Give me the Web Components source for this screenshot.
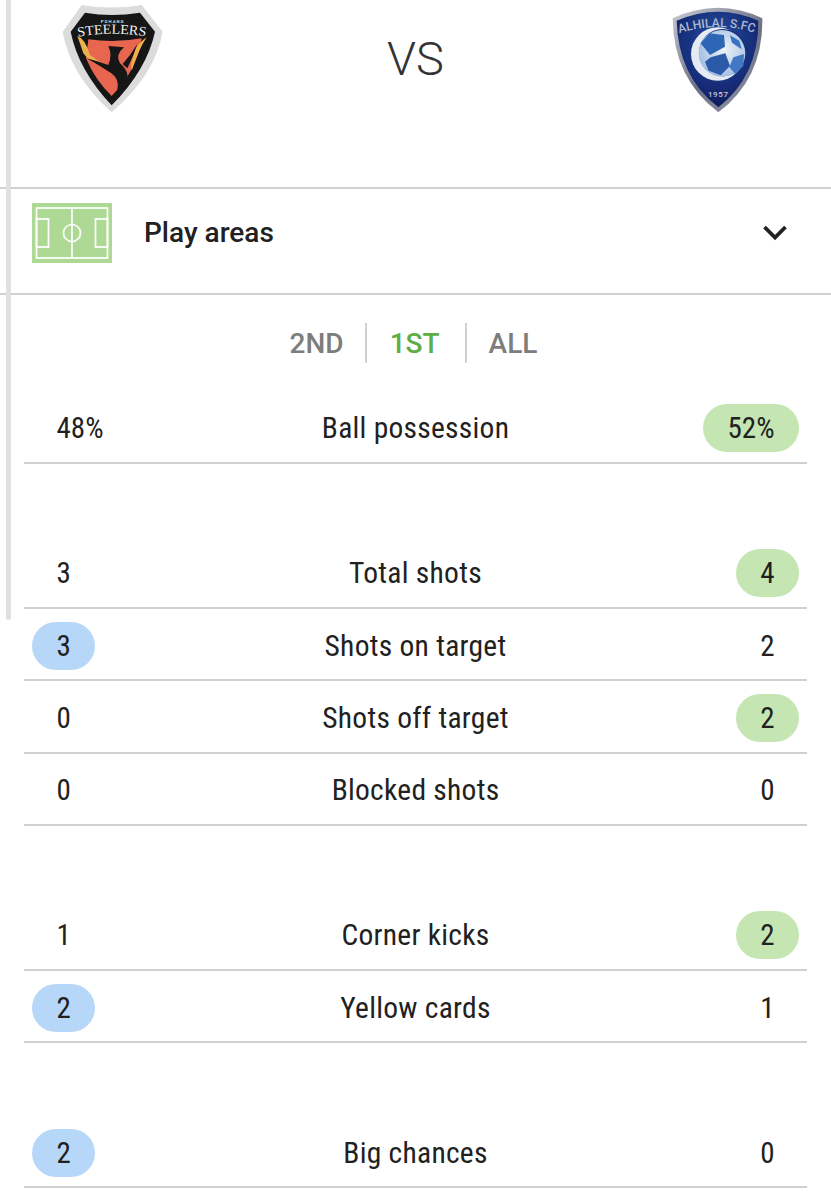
<!DOCTYPE html>
<html><head><meta charset="utf-8"><style>
html,body{margin:0;padding:0;background:#fff}
body{font-family:Roboto,"Liberation Sans",sans-serif;color:#212121;width:831px;height:1200px;overflow:hidden;position:relative}
</style></head><body>
<match-stats></match-stats>
<script>
class TeamCrest extends HTMLElement{
  connectedCallback(){
    const t=this.getAttribute('team');
    const s=this.attachShadow({mode:'open'});
    const pohang=`<svg width="140" height="120" viewBox="0 0 420 360">
      <defs><filter id="b"><feGaussianBlur stdDeviation="1.5"/></filter>
      <path id="arc" d="M114 110 Q215 92 320 110"/></defs>
      <g filter="url(#b)">
      <path d="M68 95 L125 15 Q215 30 305 15 L368 95 Q345 225 215 337 Q90 225 68 95Z" fill="#dcdcdc"/>
      <path d="M92 95 L135 38 Q215 52 300 38 L345 95 Q320 210 215 316 Q115 210 92 95Z" fill="#141414"/>
      <path d="M145 118 Q225 130 305 115 Q292 210 215 288 Q165 240 138 175Z" fill="#e8664f"/>
      <path d="M112 108 Q135 115 150 165 Q175 185 202 197 Q150 192 130 160 Q120 130 112 108Z" fill="#ecb04e"/>
      <path d="M320 112 Q295 150 275 212 Q270 190 285 150 Q300 125 320 112Z" fill="#ecb04e"/>
      <path d="M205 138 L252 142 Q224 165 240 190 Q275 220 256 255 Q243 275 226 286 Q246 240 212 218 Q180 198 140 175 Q175 184 205 195 Q218 165 205 138Z" fill="#141414"/>
      <path d="M292 132 Q280 170 262 205 L248 192 Q272 165 292 132Z" fill="#141414"/>
      </g>
      <text x="218" y="68" text-anchor="middle" font-family="Roboto,sans-serif" font-size="13" font-weight="700" fill="#dcdcdc" letter-spacing="3">POHANG</text>
      <text font-family="'Liberation Serif',serif" font-size="41" fill="#f2f2f2"><textPath href="#arc" textLength="204" lengthAdjust="spacingAndGlyphs">STEELERS</textPath></text>
    </svg>`;
    const hilal=`<svg width="140" height="120" viewBox="0 0 420 360">
      <defs>
        <linearGradient id="rim" x1="0" y1="0" x2=".8" y2="1"><stop offset="0" stop-color="#c8cbd4"/><stop offset=".6" stop-color="#6b7084"/><stop offset="1" stop-color="#8e93a4"/></linearGradient>
        <radialGradient id="bg" cx=".5" cy=".32" r=".72"><stop offset="0" stop-color="#234f9f"/><stop offset=".65" stop-color="#152c78"/><stop offset="1" stop-color="#0e1750"/></radialGradient>
        <radialGradient id="ball" cx=".55" cy=".42" r=".62"><stop offset="0" stop-color="#eef2f8"/><stop offset="1" stop-color="#9dbbe0"/></radialGradient>
        <filter id="b2"><feGaussianBlur stdDeviation="1.4"/></filter>
        <path id="arc2" d="M88 100 Q205 62 318 100"/>
      </defs>
      <g filter="url(#b2)">
      <path d="M68 55 Q205 -8 337 55 Q340 235 205 337 Q70 235 68 55Z" fill="url(#rim)"/>
      <path d="M80 62 Q205 8 325 62 Q326 228 205 322 Q84 228 80 62Z" fill="url(#bg)"/>
      <circle cx="203" cy="162" r="80" fill="#e6ebf3"/>
      <circle cx="218" cy="158" r="71" fill="#152c78"/>
      <circle cx="216" cy="160" r="70" fill="url(#ball)"/>
      <path d="M178 100 L222 105 L225 140 L180 165 L152 130Z" fill="#2f66b6"/>
      <path d="M240 106 L268 122 L275 148 L246 128Z" fill="#3872c0"/>
      <path d="M182 172 L226 160 L240 198 L212 226 L176 212 L165 185Z" fill="#2a5aa8"/>
      <path d="M250 172 L282 162 L280 198 L256 222 L238 202Z" fill="#4278c4"/>
      </g>
      <text font-family="Roboto,sans-serif" font-size="37" font-weight="500" fill="#aeb8d0"><textPath href="#arc2" textLength="228" lengthAdjust="spacingAndGlyphs">ALHILAL S.FC</textPath></text>
      <text x="205" y="290" text-anchor="middle" font-family="Roboto,sans-serif" font-size="24" font-weight="500" fill="#c6cbd9" letter-spacing="2">1957</text>
    </svg>`;
    s.innerHTML=`<style>:host{display:block;line-height:0}</style>`+(t==='pohang'?pohang:hilal);
  }
}
class MatchHeader extends HTMLElement{
  constructor(){super();this.attachShadow({mode:'open'}).innerHTML=`<style>
    :host{display:flex;box-sizing:border-box;height:187px;padding:0 41px 0 40px;justify-content:space-between;align-items:flex-start;position:relative}
    .vs{position:absolute;left:0;right:0;top:33px;text-align:center;font-size:47px;line-height:52px;font-weight:300;color:#333}
    </style><slot></slot><div class="vs">VS</div>`;}
}
class AreasBar extends HTMLElement{
  constructor(){super();this.attachShadow({mode:'open'}).innerHTML=`<style>
    :host{display:flex;box-sizing:border-box;height:108px;border-top:2px solid #d0d0d0;border-bottom:2px solid #d0d0d0;align-items:center;padding:0 44px 16px 32px}
    svg.pitch{display:block;flex:none}
    .label{flex:1;margin-left:32px;font-size:28px;font-weight:500;color:#212121;line-height:32px}
    </style>
    <svg class="pitch" width="80" height="60" viewBox="0 0 80 60">
      <rect width="80" height="60" fill="#aed994"/>
      <g fill="none" stroke="#fff" stroke-width="1.7">
        <rect x="4.5" y="5" width="71" height="50"/>
        <line x1="40" y1="5" x2="40" y2="55"/>
        <circle cx="40" cy="30" r="8.5"/>
        <rect x="4.5" y="16" width="12" height="28"/>
        <rect x="63.5" y="16" width="12" height="28"/>
      </g>
    </svg>
    <div class="label"><slot></slot></div>
    <svg width="24" height="16" viewBox="0 0 24 16"><path d="M1.5 2 L12 12.5 L22.5 2" fill="none" stroke="#212121" stroke-width="3.8"/></svg>`;}
}
class PeriodTabs extends HTMLElement{
  constructor(){super();this.attachShadow({mode:'open'}).innerHTML=`<style>
    :host{display:flex;height:96.5px;justify-content:center;align-items:center;box-sizing:border-box;padding:0 4px 1.5px 0}
    </style><slot></slot>`;}
}
class PeriodTab extends HTMLElement{
  constructor(){super();this.attachShadow({mode:'open'}).innerHTML=`<style>
    :host{display:block;box-sizing:border-box;height:40px;line-height:41px;font-size:28px;font-weight:500;color:#7d7d7d;padding:0 25px 0 23px;border-left:2px solid #d0d0d0}
    :host(:first-child){border-left:0;padding:0 21px 0 24px}
    :host(:last-child){padding:0 24px 0 22px}
    :host([active]){color:#5fae45}
    </style><slot></slot>`;}
}
class StatRow extends HTMLElement{
  constructor(){super();
    const l=this.getAttribute('l'),r=this.getAttribute('r'),w=this.getAttribute('win'),n=this.getAttribute('name');
    this.attachShadow({mode:'open'}).innerHTML=`<style>
    :host{display:grid;grid-template-columns:1fr 1fr 1fr;align-items:center;box-sizing:border-box;height:72.45px;margin:0 24px;padding-top:3px;border-bottom:2px solid #d0d0d0;color:#212121}
    :host([gap]){margin-top:72.45px}
    .c{display:flex}
    .l{justify-content:flex-start;padding-left:8px}
    .r{justify-content:flex-end;padding-right:8px}
    .v,.n{font-family:"Roboto Condensed",Roboto,sans-serif;font-stretch:condensed;line-height:48px}
    .n{font-size:29.5px;text-align:center;letter-spacing:.27px;white-space:nowrap}
    .v{font-size:29px;box-sizing:border-box;height:48px;border-radius:24px;text-align:center;padding:0 24.5px}
    .v.home{background:#b6d7f8}
    .v.away{background:#c5e6b3}
    </style>
    <div class="c l"><div class="v ${w==='l'?'home':''}">${l}</div></div>
    <div class="n">${n}</div>
    <div class="c r"><div class="v ${w==='r'?'away':''}">${r}</div></div>`;
  }
}
class MatchStats extends HTMLElement{
  constructor(){super();
    const rows=[['48%','52%','Ball possession','r',0],['3','4','Total shots','r',1],['3','2','Shots on target','l',0],['0','2','Shots off target','r',0],['0','0','Blocked shots','',0],['1','2','Corner kicks','r',1],['2','1','Yellow cards','l',0],['2','0','Big chances','l',1]];
    this.attachShadow({mode:'open'}).innerHTML=`<style>
    :host{display:block;position:relative;height:1200px;overflow:hidden}
    .scroll{position:absolute;left:6px;top:-10px;width:5px;height:630px;background:#e0e0e0;border-radius:3px}
    </style>
    <match-header><team-crest team="pohang"></team-crest><team-crest team="hilal"></team-crest></match-header>
    <areas-bar>Play areas</areas-bar>
    <period-tabs><period-tab>2ND</period-tab><period-tab active>1ST</period-tab><period-tab>ALL</period-tab></period-tabs>
    ${rows.map(r=>`<stat-row l="${r[0]}" r="${r[1]}" name="${r[2]}" win="${r[3]}" ${r[4]?'gap':''}></stat-row>`).join('')}
    <div class="scroll"></div>`;
  }
}
customElements.define('team-crest',TeamCrest);
customElements.define('match-header',MatchHeader);
customElements.define('areas-bar',AreasBar);
customElements.define('period-tabs',PeriodTabs);
customElements.define('period-tab',PeriodTab);
customElements.define('stat-row',StatRow);
customElements.define('match-stats',MatchStats);
</script>
</body></html>
